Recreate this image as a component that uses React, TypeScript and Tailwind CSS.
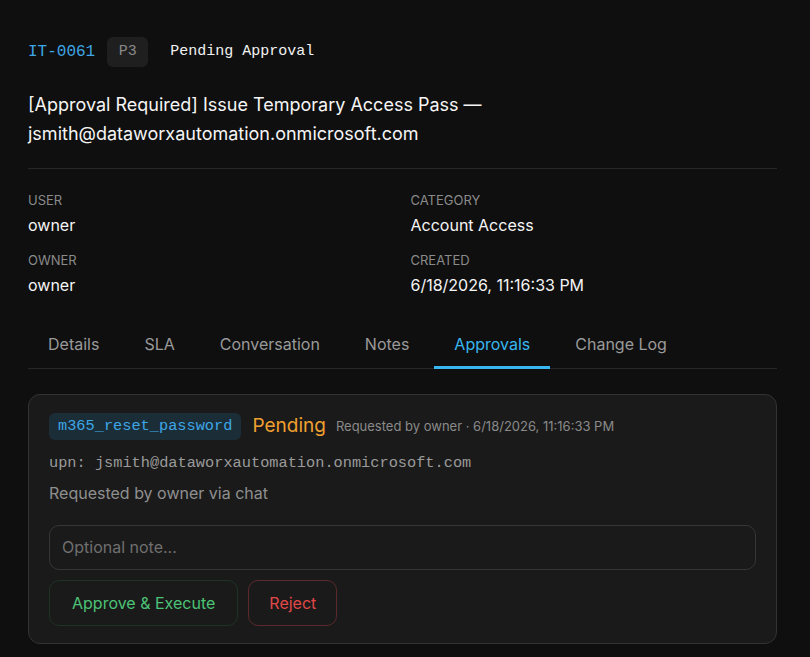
import React from "react";

const sans = { fontFamily: "Inter, 'Noto Sans', sans-serif" };
const mono = "font-['Liberation_Mono',monospace]";

export default function App() {
  const tabs = ["Details", "SLA", "Conversation", "Notes", "Approvals", "Change Log"];
  return (
    <div
      className="min-h-[657px] w-full bg-[#0f0f0f] pl-[28px] pr-[33px] pt-[37px] text-white"
      style={sans}
    >
      <div className="flex items-center">
        <span className={mono + " text-[16px] text-[#3ea6e6]"}>IT-0061</span>
        <span className={"ml-[12px] flex h-[30px] w-[41px] items-center justify-center rounded-[6px] bg-[#1f1f1f] text-[15px] text-[#8a8a8a] " + mono}>
          P3
        </span>
        <span className={"ml-[22px] text-[15px] text-[#f2f2f2] " + mono}>Pending Approval</span>
      </div>

      <h1 className="mt-[23px] text-[18px] leading-[29px] text-[#f5f5f5]">
        [Approval Required] Issue Temporary Access Pass —<br />
        jsmith@dataworxautomation.onmicrosoft.com
      </h1>

      <div className="mt-[20px] border-t border-[#262626]" />

      <div className="mt-[22px] grid grid-cols-2 gap-x-4 gap-y-[16px]">
        {[
          ["USER", "owner"],
          ["CATEGORY", "Account Access"],
          ["OWNER", "owner"],
          ["CREATED", "6/18/2026, 11:16:33 PM"],
        ].map(([l, v]) => (
          <div key={l}>
            <div className="text-[13px] leading-[18px] text-[#8a8a8a]">{l}</div>
            <div className="mt-[6px] text-[16px] leading-[20px] text-[#f5f5f5]">{v}</div>
          </div>
        ))}
      </div>

      <div className="mt-[35px] flex gap-[5px] border-b border-[#262626]">
        {tabs.map((t) => (
          <div
            key={t}
            className={
              "px-5 pb-[12px] pt-[4px] text-[16px] leading-[20px] " +
              (t === "Approvals"
                ? "-mb-px border-b-[3px] border-[#38b6f0] text-[#38b6f0]"
                : "text-[#9a9a9a]")
            }
          >
            {t}
          </div>
        ))}
      </div>

      <div className="mt-[25px] rounded-[12px] border border-[#333333] bg-[#1a1a1a] px-5 pb-[17px] pt-[17px]">
        <div className="flex items-center">
          <span className={"rounded-[6px] bg-[#1b2e38] px-[9px] py-[4px] text-[15.3px] leading-[19px] text-[#3ea6e6] " + mono}>
            m365_reset_password
          </span>
          <span className="ml-[11px] text-[19px] text-[#f0a030]">Pending</span>
          <span className="ml-[10px] text-[13px] text-[#8a8a8a]">
            Requested by owner · 6/18/2026, 11:16:33 PM
          </span>
        </div>
        <div className={"mt-[12px] text-[15.3px] leading-[20px] text-[#9a9a9a] " + mono}>
          upn: jsmith@dataworxautomation.onmicrosoft.com
        </div>
        <div className="mt-[10px] text-[16px] leading-[20px] text-[#8f8f8f]">
          Requested by owner via chat
        </div>
        <input
          className="mt-[22px] h-[45px] w-full rounded-[10px] border border-[#363636] bg-[#1a1a1a] px-[12px] text-[16px] text-white outline-none placeholder:text-[#6f6f6f]"
          style={sans}
          placeholder="Optional note..."
        />
        <div className="mt-[10px] flex gap-[10px]">
          <button
            className="h-[46px] rounded-[10px] border border-[#1f3326] px-[22px] text-[16px] text-[#4cc276]"
            style={sans}
          >
            Approve &amp; Execute
          </button>
          <button
            className="h-[46px] rounded-[10px] border border-[#5a2a2c] px-[20px] text-[16px] text-[#e04848]"
            style={sans}
          >
            Reject
          </button>
        </div>
      </div>
    </div>
  );
}
